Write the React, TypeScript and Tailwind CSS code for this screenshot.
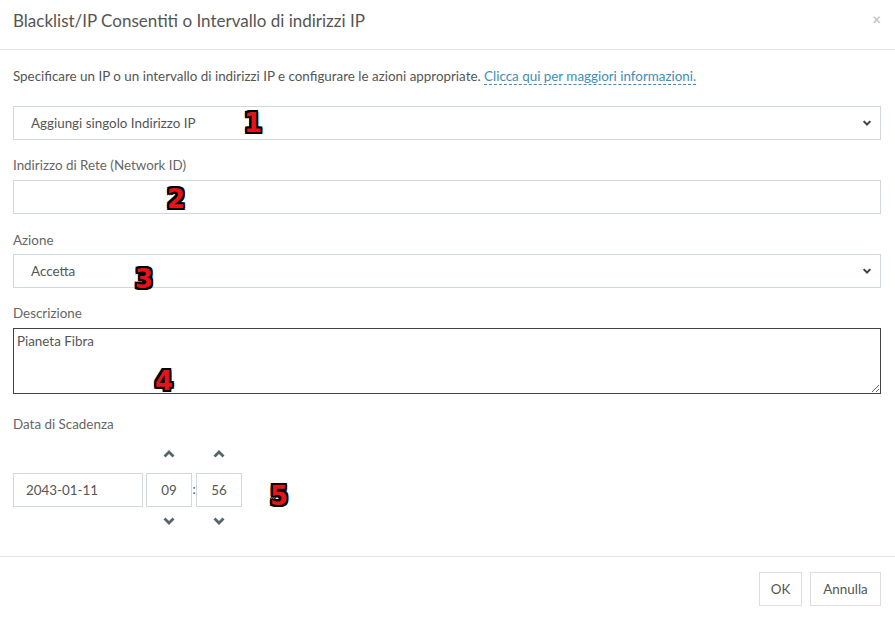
import React from "react";

function Chevron({ up, className }: { up?: boolean; className?: string }) {
  return (
    <svg width="12" height="8" viewBox="0 0 12 8" className={className}>
      <polyline
        points={up ? "1.5,6.5 6,2 10.5,6.5" : "1.5,1.5 6,6 10.5,1.5"}
        fill="none"
        stroke="currentColor"
        strokeWidth="2.8"
      />
    </svg>
  );
}

function Mark({ n, className }: { n: string; className: string }) {
  return (
    <span
      className={`absolute font-['DejaVu_Sans'] text-[26px] font-bold leading-none text-[#e3141b] ${className}`}
      style={{ textShadow: "2px 0 #000, -2px 0 #000, 0 2px #000, 0 -2px #000, 2px 2px #000, -2px -2px #000, 2px -2px #000, -2px 2px #000" }}
    >
      {n}
    </span>
  );
}

function SelectBox({ value }: { value: string }) {
  return (
    <div className="flex h-[34px] items-center justify-between border border-[#d2d6de] pl-[17px] pr-[8px] text-[13.4px] text-[#555]">
      <span>{value}</span>
      <Chevron className="h-[6px] w-[10px] text-[#444]" />
    </div>
  );
}

function Label({ children, className }: { children: React.ReactNode; className: string }) {
  return <div className={`h-[20px] text-[13.4px] leading-[20px] text-[#666] ${className}`}>{children}</div>;
}

function Spinner({ value }: { value: string }) {
  return (
    <div className="flex w-[46px] flex-col items-center">
      <Chevron up className="text-[#56646c]" />
      <div className="mt-[15px] flex h-[34px] w-[46px] items-center justify-center border border-[#d2d6de] text-[13.4px] text-[#555]">
        {value}
      </div>
      <Chevron className="mt-[10px] text-[#56646c]" />
    </div>
  );
}

export default function App() {
  return (
    <div className="relative h-[618px] w-[895px] bg-white font-['Lato',sans-serif] text-[#555]">
      <div className="flex h-[50px] items-start justify-between border-b border-[#e5e5e5] pl-[13px] pr-[14px] pt-[10px]">
        <h4 className="text-[17px] leading-[22px] text-[#555]">
          Blacklist/IP Consentiti o Intervallo di indirizzi IP
        </h4>
        <span className="mt-[-2px] text-[15px] font-bold text-[#c5c5c5]">×</span>
      </div>

      <div className="px-[13px] pr-[14px]">
        <p className="mt-[16px] h-[20px] text-[13.4px] leading-[20px] text-[#555]">
          Specificare un IP o un intervallo di indirizzi IP e configurare le azioni appropriate.{" "}
          <a className="border-b border-dashed border-[#3c8dbc] text-[#3c8dbc]">Clicca qui per maggiori informazioni.</a>
        </p>

        <div className="relative mt-[20px]">
          <SelectBox value="Aggiungi singolo Indirizzo IP" />
          <Mark n="1" className="left-[231px] top-[4px]" />
        </div>

        <Label className="mt-[15px]">Indirizzo di Rete (Network ID)</Label>
        <div className="relative mt-[5px] h-[34px] border border-[#d2d6de]">
          <Mark n="2" className="left-[153px] top-[5px]" />
        </div>

        <Label className="mt-[16px]">Azione</Label>
        <div className="relative mt-[4px]">
          <SelectBox value="Accetta" />
          <Mark n="3" className="left-[122px] top-[12px]" />
        </div>

        <Label className="mt-[15px]">Descrizione</Label>
        <div className="relative mt-[5px]">
          <textarea
            readOnly
            defaultValue="Pianeta Fibra"
            className="block h-[66px] w-full resize-y border border-[#444] px-[3px] py-[2px] text-[13.4px] leading-[20px] text-[#555] outline-none"
          />
          <Mark n="4" className="left-[142px] top-[40px]" />
        </div>

        <Label className="mt-[20px]">Data di Scadenza</Label>
        <div className="relative mt-[16px] flex items-start">
          <div className="mt-[23px] flex h-[34px] w-[130px] items-center border border-[#d2d6de] pl-[12px] text-[13.4px] text-[#555]">
            2043-01-11
          </div>
          <div className="ml-[3px]">
            <Spinner value="09" />
          </div>
          <div className="mt-[23px] flex h-[34px] w-[4px] items-center justify-center text-[13px] text-[#555]">:</div>
          <Spinner value="56" />
          <Mark n="5" className="left-[257px] top-[33px]" />
        </div>
      </div>

      <div className="absolute bottom-0 left-0 right-0 flex h-[62px] items-start justify-end gap-[8px] border-t border-[#e5e5e5] pr-[14px] pt-[15px]">
        <button className="h-[34px] w-[43px] border border-[#ddd] bg-white text-[13.4px] text-[#555]">OK</button>
        <button className="h-[34px] w-[71px] border border-[#ddd] bg-white text-[13.4px] text-[#555]">Annulla</button>
      </div>
    </div>
  );
}
